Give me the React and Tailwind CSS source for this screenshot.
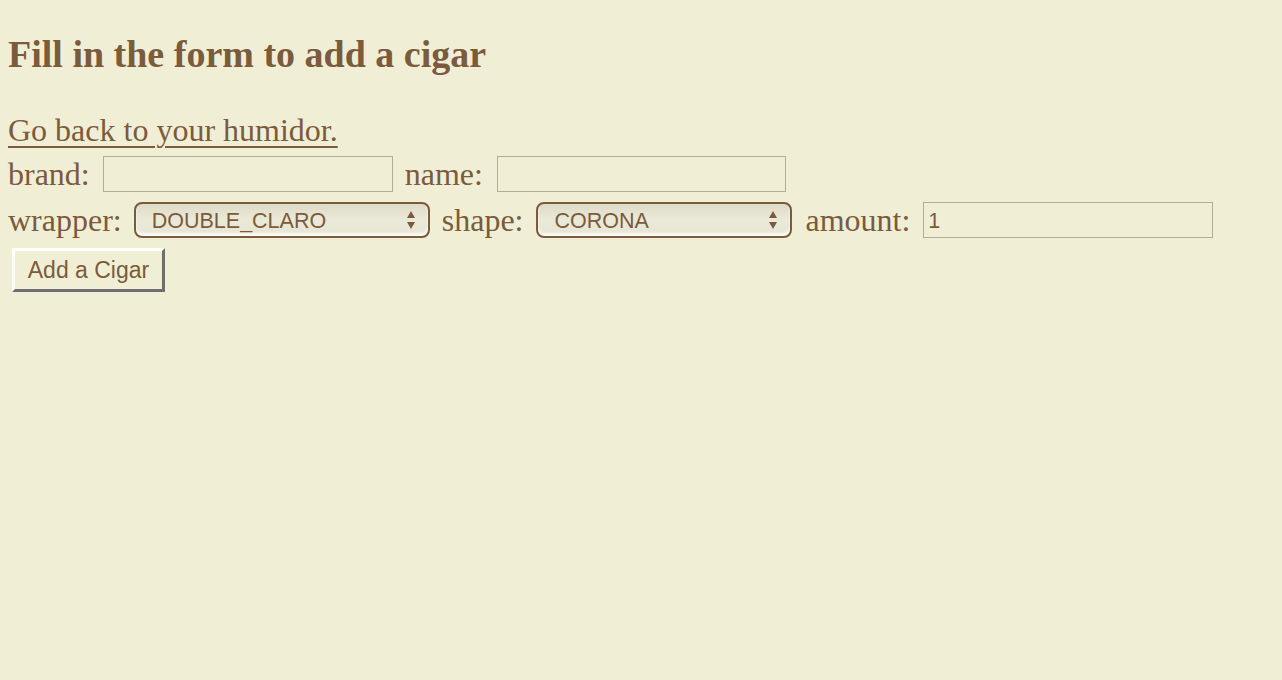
const Chevrons = () => (
  <svg width="10" height="20" viewBox="0 0 10 20" className="shrink-0">
    <path d="M5 1 L9 8 L1 8 Z" fill="#7b5b3b" />
    <path d="M5 19 L9 12 L1 12 Z" fill="#7b5b3b" />
  </svg>
);

const FakeSelect = ({ value, width }) => (
  <div
    className={`flex items-center justify-between h-[36px] ${width} rounded-[8px] border-2 border-[#7b5b3b] bg-gradient-to-b from-[#dedcc7] via-[#ebe9d8] to-[#e6e4d1] shadow-[inset_0_-3px_3px_rgba(255,255,255,0.85)] pl-[16px] pr-[12px] font-['Liberation_Sans',sans-serif] text-[21.5px] text-[#7b5b3b]`}
  >
    <span className="pt-[4px] leading-none">{value}</span>
    <Chevrons />
  </div>
);

const App = () => {
  return (
    <div className="min-h-[680px] bg-[#f0efd6] px-2 font-['Liberation_Serif',serif] text-[#7b5b3b]">
      <h2 className="pt-[34px] text-[38px] font-bold leading-[40px]">Fill in the form to add a cigar</h2>

      <a href="#" className="mt-[38px] block w-max text-[32px] leading-[36px] underline underline-offset-[5px] decoration-[2px]">
        Go back to your humidor.
      </a>

      {/* brand / name */}
      <div className="mt-[8px] flex items-center h-[36px] text-[32px]">
        <span className="mr-[13px]">brand:</span>
        <div className="h-[36px] w-[290px] border border-[#b0ae98]" />
        <span className="ml-[12px] mr-[14px]">name:</span>
        <div className="h-[36px] w-[289px] border border-[#b0ae98]" />
      </div>

      {/* wrapper / shape / amount */}
      <div className="mt-[10px] flex items-center h-[36px] text-[32px]">
        <span className="mr-[12px]">wrapper:</span>
        <FakeSelect value="DOUBLE_CLARO" width="w-[296px]" />
        <span className="ml-[12px] mr-[13px]">shape:</span>
        <FakeSelect value="CORONA" width="w-[256px]" />
        <span className="ml-[13px] mr-[13px]">amount:</span>
        <div className="flex items-center h-[36px] w-[290px] border border-[#b0ae98] pl-[4px] pt-[2px] font-['Liberation_Sans',sans-serif] text-[21.5px]">
          1
        </div>
      </div>

      <button className="mt-[10px] ml-[4px] h-[44px] w-[153px] border-[3px] border-t-white border-l-white border-r-[#6e6e6e] border-b-[#6e6e6e] font-['Liberation_Sans',sans-serif] text-[23px] text-[#7b5b3b]">
        Add a Cigar
      </button>
    </div>
  );
};

export default App;
